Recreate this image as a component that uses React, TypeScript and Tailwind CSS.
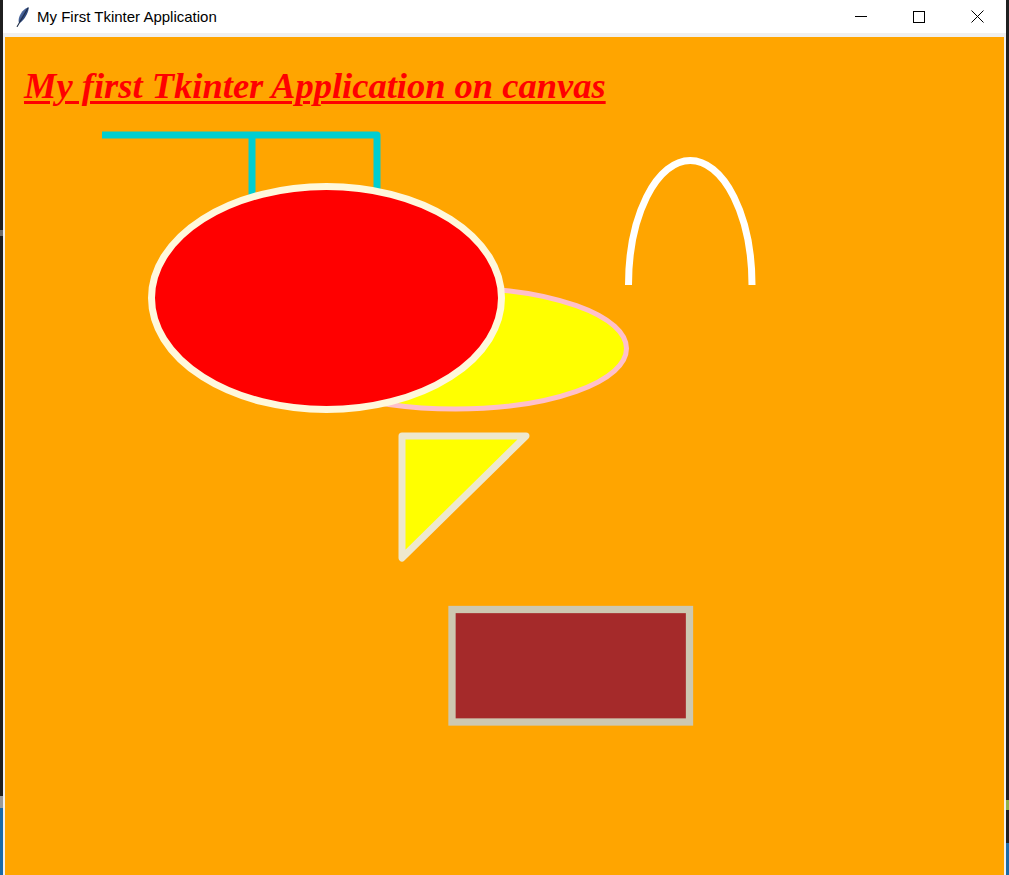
import React from "react";

function FeatherIcon() {
  return (
    <svg width="16" height="22" viewBox="0 0 16 22" aria-hidden>
      <defs>
        <linearGradient id="fth" x1="0" y1="0" x2="1" y2="1">
          <stop offset="0" stopColor="#8fa6c8" />
          <stop offset="0.5" stopColor="#34508a" />
          <stop offset="1" stopColor="#1b2a4e" />
        </linearGradient>
      </defs>
      <path d="M13.5 1.2 C9 2.5 5 7 3.8 12.5 C3.4 14.5 3.6 16.2 4.2 17.2 C7.5 15.5 10.8 11 12.6 6.5 C13.4 4.5 13.8 2.6 13.5 1.2 Z" fill="url(#fth)" />
      <path d="M13 2 L2.2 20.5" stroke="#1d2b45" strokeWidth="1.1" strokeLinecap="round" />
    </svg>
  );
}

function TitleBar() {
  return (
    <div className="flex h-[33px] items-center bg-white">
      <div className="ml-[11px] flex h-[33px] w-[18px] items-center justify-center">
        <FeatherIcon />
      </div>
      <span className="ml-[5px] font-['Liberation_Sans',sans-serif] text-[15px] leading-none text-black">
        My First Tkinter Application
      </span>
      <div className="ml-auto flex h-full">
        <button type="button" className="flex h-full w-[58px] items-center justify-center" aria-label="Minimize">
          <span className="block h-px w-[12px] bg-black" />
        </button>
        <button type="button" className="flex h-full w-[58px] items-center justify-center" aria-label="Maximize">
          <span className="block h-[12px] w-[12px] border border-black" />
        </button>
        <button type="button" className="flex h-full w-[58px] items-center justify-center" aria-label="Close">
          <svg width="13" height="13" viewBox="0 0 13 13" aria-hidden>
            <path d="M0.5 0.5 L12.5 12.5 M12.5 0.5 L0.5 12.5" stroke="#000" strokeWidth="1" />
          </svg>
        </button>
      </div>
    </div>
  );
}

function Drawing() {
  // coordinates are screen pixels; the canvas starts at (5, 37)
  return (
    <svg className="absolute inset-0" width="999" height="838" viewBox="5 37 999 838">
      {/* cyan line */}
      <polyline
        points="102,135 377,135 377,260"
        fill="none"
        stroke="#00ced1"
        strokeWidth="7"
        strokeLinejoin="round"
      />
      <line x1="252" y1="135" x2="252" y2="260" stroke="#00ced1" strokeWidth="7" />

      {/* yellow oval */}
      <ellipse cx="455.5" cy="348.5" rx="171" ry="60.5" fill="#ffff00" stroke="#ffc0cb" strokeWidth="5" />

      {/* red oval */}
      <ellipse cx="326.5" cy="298" rx="175" ry="111.5" fill="#ff0000" stroke="#fff8dc" strokeWidth="7" />

      {/* white arc */}
      <path d="M628.5 285 A61.75 124.5 0 0 1 752 285" fill="none" stroke="#ffffff" strokeWidth="7" />

      {/* triangle */}
      <polygon
        points="402,436 526,436 402,558"
        fill="#ffff00"
        stroke="#eee8cd"
        strokeWidth="7"
        strokeLinejoin="round"
      />

      {/* rectangle */}
      <rect x="452" y="609.5" width="237.5" height="112.5" fill="#a52a2a" stroke="#cdc8b1" strokeWidth="7.3" />
    </svg>
  );
}

export default function App() {
  return (
    <div className="flex h-[875px] w-[1009px] overflow-hidden bg-[#1f1f1f]">
      <div className="flex w-[3px] flex-col">
        <div className="h-[230px]" />
        <div className="h-[6px] bg-[#6b6b6b]" />
        <div className="h-[560px]" />
        <div className="h-[12px] bg-[#9a9a9a]" />
        <div className="flex-1 bg-[#1a6aa8]" />
      </div>
      <div className="flex w-[1003px] flex-col">
        <TitleBar />
        <div className="h-[4px] bg-[#f0f0f0]" />
        <div className="flex flex-1">
          <div className="w-[2px] bg-[#f0f0f0]" />
          <div className="relative w-[999px] bg-[#ffa500]">
            <Drawing />
            <div className="absolute left-[19px] top-[31px] whitespace-nowrap font-['Liberation_Serif',serif] text-[36.5px] font-bold italic leading-none text-[#ff0000] underline decoration-[3px] underline-offset-[3px]">
              My first Tkinter Application on canvas
            </div>
          </div>
          <div className="w-[2px] bg-[#f0f0f0]" />
        </div>
      </div>
      <div className="flex w-[3px] flex-col">
        <div className="h-[800px]" />
        <div className="h-[10px] bg-[#8fb04a]" />
        <div className="h-[33px]" />
        <div className="flex-1 bg-[#1a6aa8]" />
      </div>
    </div>
  );
}
